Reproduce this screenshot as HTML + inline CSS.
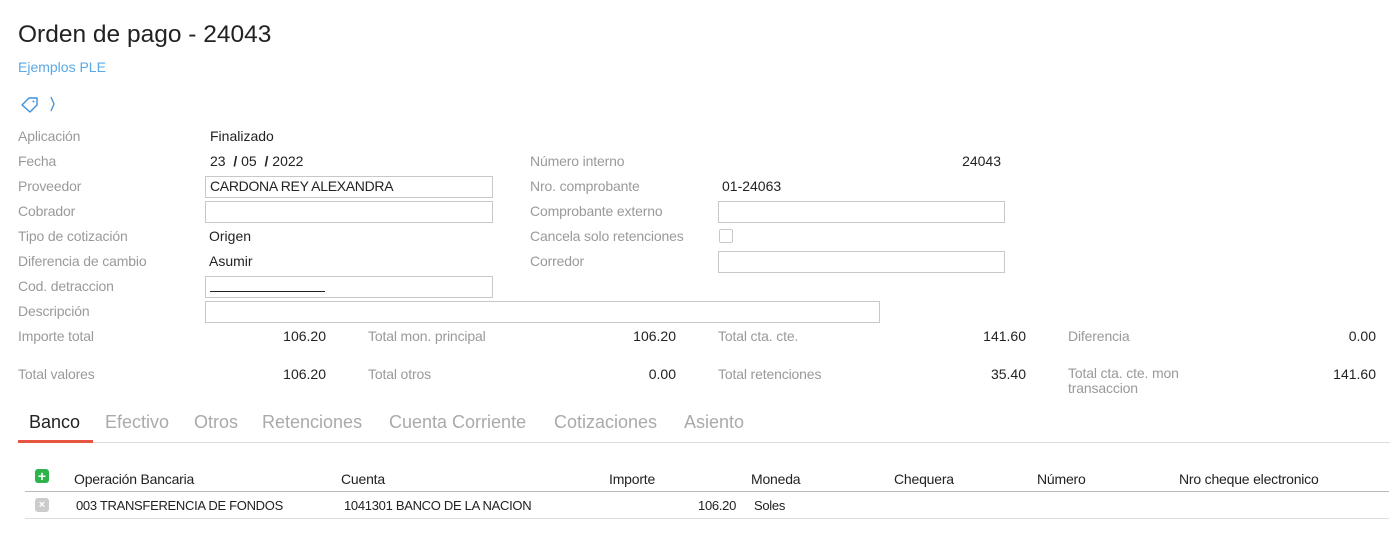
<!DOCTYPE html>
<html><head><meta charset="utf-8"><style>
body{margin:0;width:1390px;height:551px;background:#fff;font-family:"Liberation Sans",sans-serif;position:relative;overflow:hidden}
.a{position:absolute;white-space:nowrap}
.l{color:#9a9a9a;font-size:14px;letter-spacing:-0.15px}
.v{color:#222;font-size:14px}
.i{position:absolute;border:1px solid #c8c8c8;box-sizing:border-box;height:22px}
.r{text-align:right}
.t{font-size:18px;color:#aaa;top:412px}
.h{font-size:14px;color:#222;top:471px;letter-spacing:-0.2px}
.c{font-size:13px;color:#222;top:498px;letter-spacing:-0.3px}
</style></head><body>
<div class="a" style="left:18px;top:21px;font-size:24.5px;color:#222">Orden de pago - 24043</div>
<div class="a" style="left:18px;top:59px;font-size:14px;color:#5aa9e6">Ejemplos PLE</div>
<svg class="a" style="left:20px;top:96px" width="40" height="18" viewBox="0 0 40 18"><path d="M2 9 L9 2 L17 2 L17 9 L10 16 Z" fill="none" stroke="#3d8fdd" stroke-width="1.4" stroke-linejoin="round"/><circle cx="13.5" cy="5.5" r="1" fill="#3d8fdd"/><path d="M31 1 L34 8 L31 15" fill="none" stroke="#3d8fdd" stroke-width="1.3"/></svg>

<div class="a l" style="left:18px;top:128px">Aplicación</div><div class="a v" style="left:210px;top:128px">Finalizado</div>
<div class="a l" style="left:18px;top:153px">Fecha</div><div class="a v" style="left:210px;top:153px">23&nbsp; <b>/</b> 05 &nbsp;<b>/</b> 2022</div>
<div class="a l" style="left:18px;top:178px">Proveedor</div><div class="i" style="left:205px;top:176px;width:288px"></div><div class="a v" style="left:210px;top:178px;letter-spacing:-0.3px">CARDONA REY ALEXANDRA</div>
<div class="a l" style="left:18px;top:203px">Cobrador</div><div class="i" style="left:205px;top:201px;width:288px"></div>
<div class="a l" style="left:18px;top:228px">Tipo de cotización</div><div class="a v" style="left:209px;top:228px">Origen</div>
<div class="a l" style="left:18px;top:253px">Diferencia de cambio</div><div class="a v" style="left:209px;top:253px">Asumir</div>
<div class="a l" style="left:18px;top:278px">Cod. detraccion</div><div class="i" style="left:205px;top:276px;width:288px"></div><div class="a" style="left:210px;top:291px;width:115px;border-top:1px solid #222"></div>
<div class="a l" style="left:18px;top:303px">Descripción</div><div class="i" style="left:205px;top:301px;width:675px"></div>

<div class="a l" style="left:530px;top:153px">Número interno</div><div class="a v r" style="left:900px;width:101px;top:153px">24043</div>
<div class="a l" style="left:530px;top:178px">Nro. comprobante</div><div class="a v" style="left:722px;top:178px">01-24063</div>
<div class="a l" style="left:530px;top:203px">Comprobante externo</div><div class="i" style="left:718px;top:201px;width:287px"></div>
<div class="a l" style="left:530px;top:228px">Cancela solo retenciones</div><div class="i" style="left:719px;top:229px;width:14px;height:14px;border-radius:2px"></div>
<div class="a l" style="left:530px;top:253px">Corredor</div><div class="i" style="left:718px;top:251px;width:287px"></div>

<div class="a l" style="left:18px;top:328px">Importe total</div><div class="a v r" style="left:226px;width:100px;top:328px">106.20</div>
<div class="a l" style="left:368px;top:328px">Total mon. principal</div><div class="a v r" style="left:576px;width:100px;top:328px">106.20</div>
<div class="a l" style="left:718px;top:328px">Total cta. cte.</div><div class="a v r" style="left:926px;width:100px;top:328px">141.60</div>
<div class="a l" style="left:1068px;top:328px">Diferencia</div><div class="a v r" style="left:1276px;width:100px;top:328px">0.00</div>
<div class="a l" style="left:18px;top:366px">Total valores</div><div class="a v r" style="left:226px;width:100px;top:366px">106.20</div>
<div class="a l" style="left:368px;top:366px">Total otros</div><div class="a v r" style="left:576px;width:100px;top:366px">0.00</div>
<div class="a l" style="left:718px;top:366px">Total retenciones</div><div class="a v r" style="left:926px;width:100px;top:366px">35.40</div>
<div class="a l" style="left:1068px;top:366px;line-height:15px">Total cta. cte. mon<br>transaccion</div><div class="a v r" style="left:1276px;width:100px;top:366px">141.60</div>

<div class="a t" style="left:29px;color:#222">Banco</div>
<div class="a t" style="left:105px">Efectivo</div>
<div class="a t" style="left:194px">Otros</div>
<div class="a t" style="left:262px">Retenciones</div>
<div class="a t" style="left:389px">Cuenta Corriente</div>
<div class="a t" style="left:554px">Cotizaciones</div>
<div class="a t" style="left:684px">Asiento</div>
<div class="a" style="left:18px;top:442px;width:1372px;border-top:1px solid #ddd"></div>
<div class="a" style="left:18px;top:440px;width:75px;height:3px;background:#e5553f"></div>

<div class="a" style="left:35px;top:469px;width:14px;height:14px;border-radius:3px;background:#2db34a;color:#fff;font-size:14px;font-weight:bold;line-height:14px;text-align:center">+</div>
<div class="a h" style="left:74px">Operación Bancaria</div>
<div class="a h" style="left:341px">Cuenta</div>
<div class="a h" style="left:609px">Importe</div>
<div class="a h" style="left:751px">Moneda</div>
<div class="a h" style="left:894px">Chequera</div>
<div class="a h" style="left:1037px">Número</div>
<div class="a h" style="left:1179px">Nro cheque electronico</div>
<div class="a" style="left:25px;top:491px;width:1364px;border-top:1px solid #bbb"></div>
<div class="a" style="left:35px;top:498px;width:14px;height:14px;border-radius:3px;background:#ccc;color:#fff;font-size:11px;font-weight:bold;line-height:14px;text-align:center">×</div>
<div class="a c" style="left:76px">003 TRANSFERENCIA DE FONDOS</div>
<div class="a c" style="left:344px">1041301 BANCO DE LA NACION</div>
<div class="a c r" style="left:636px;width:100px">106.20</div>
<div class="a c" style="left:754px">Soles</div>
<div class="a" style="left:25px;top:518px;width:1364px;border-top:1px solid #ddd"></div>
</body></html>
